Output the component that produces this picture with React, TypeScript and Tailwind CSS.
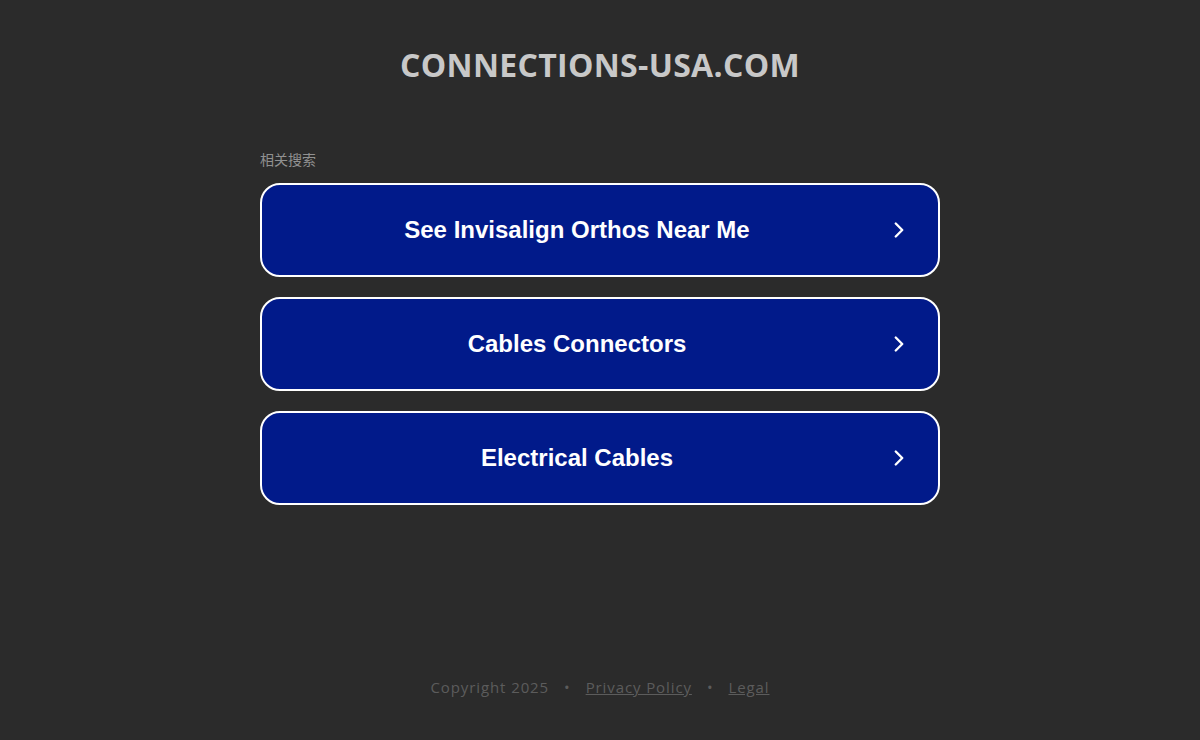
import { ChevronRight } from "lucide-react";

const links = ["See Invisalign Orthos Near Me", "Cables Connectors", "Electrical Cables"];

export default function App() {
  return (
    <div className="min-h-[740px] bg-[#2b2b2b] flex flex-col items-center">
      <h1 className="mt-[44px] text-[32px] leading-[42px] font-bold text-[#c8c8c8] tracking-[0.01em] font-['Open_Sans',sans-serif]">
        CONNECTIONS-USA.COM
      </h1>

      <div className="mt-[63px] w-[680px]">
        <div className="text-[14px] leading-[20px] text-[#919191] font-['Noto_Sans_CJK_SC',sans-serif]">相关搜索</div>
        <div className="mt-[14px] flex flex-col gap-[20px]">
          {links.map((t) => (
            <a
              key={t}
              href="#"
              className="h-[94px] rounded-[20px] border-2 border-white bg-[#011a8a] flex items-center pl-[6px] pr-[26px] text-white"
            >
              <span className="flex-1 text-center text-[24px] font-bold font-['Liberation_Sans',Arial,sans-serif]">{t}</span>
              <ChevronRight className="w-[26px] h-[26px]" strokeWidth={2.2} />
            </a>
          ))}
        </div>
      </div>

      <div className="mt-[171px] flex items-center gap-[15px] text-[15px] text-[#5c5c5c] tracking-[0.06em] font-['Open_Sans',sans-serif]">
        <span>Copyright 2025</span>
        <span>•</span>
        <a href="#" className="underline">Privacy Policy</a>
        <span>•</span>
        <a href="#" className="underline">Legal</a>
      </div>
    </div>
  );
}
